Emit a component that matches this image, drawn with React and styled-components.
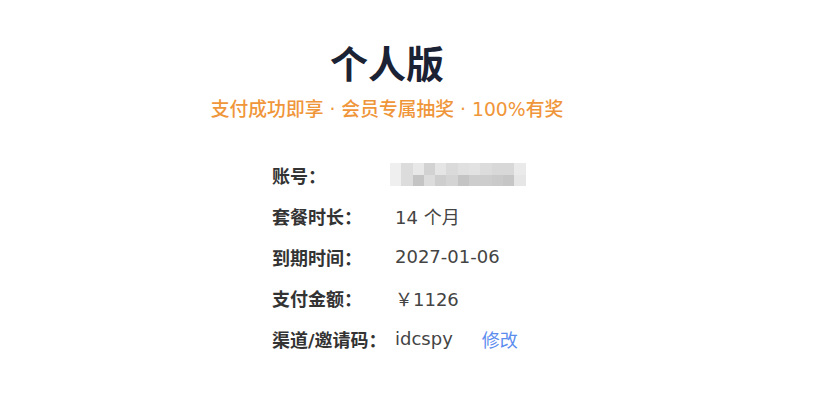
import React from "react";
import styled, { createGlobalStyle } from "styled-components";

const GlobalStyle = createGlobalStyle`
  body {
    margin: 0;
    background: #fff;
    font-family: "DejaVu Sans", "Noto Sans CJK SC", sans-serif;
  }
`;

const Page = styled.div`
  width: 774px;
  padding-top: 42px;
  text-align: center;
`;

const Title = styled.h1`
  margin: 0;
  font-size: 38px;
  line-height: 46px;
  font-weight: 700;
  color: #1a2233;
`;

const Subtitle = styled.p`
  margin: 10px 0 0;
  font-size: 18.8px;
  line-height: 24px;
  font-weight: 500;
  color: #f0963a;
`;

const InfoList = styled.div`
  width: 230px;
  margin: 32px auto 0;
  display: grid;
  grid-template-columns: 123px auto;
  grid-auto-rows: 41px;
  align-items: center;
  text-align: left;
`;

const Label = styled.div`
  font-size: 18px;
  font-weight: 700;
  color: #333;
  white-space: nowrap;
`;

const Value = styled.div`
  font-size: 18px;
  color: #444;
  white-space: nowrap;
  display: flex;
  align-items: center;
`;

const EditLink = styled.a`
  margin-left: 29px;
  color: #5b8def;
  text-decoration: none;
  cursor: pointer;
`;

const Mosaic = styled.div`
  display: grid;
  grid-template-columns: repeat(12, 11.3px);
  grid-template-rows: repeat(2, 11.5px);
  margin-left: -5px;
`;

const Cell = styled.span`
  background: ${(p) => p.$c};
`;

const mosaic = [
  "#efefef", "#dcdcdc", "#e8e8e8", "#d2d2d2", "#e5e5e5", "#dadada",
  "#e0e0e0", "#e2e2e2", "#dcdcdc", "#d8d8d8", "#d8d8d8", "#eaeaea",
  "#efefef", "#dcdcdc", "#c4c4c4", "#dcdcdc", "#cecece", "#d4d4d4",
  "#c4c4c4", "#cdcdcd", "#cdcdcd", "#cacaca", "#c6c6c6", "#e6e6e6",
];

export default function App() {
  return (
    <>
      <GlobalStyle />
      <Page>
        <Title>个人版</Title>
        <Subtitle>支付成功即享 · 会员专属抽奖 · 100%有奖</Subtitle>
        <InfoList>
          <Label>账号：</Label>
          <Value>
            <Mosaic>
              {mosaic.map((c, i) => (
                <Cell key={i} $c={c} />
              ))}
            </Mosaic>
          </Value>
          <Label>套餐时长：</Label>
          <Value>14 个月</Value>
          <Label>到期时间：</Label>
          <Value>2027-01-06</Value>
          <Label>支付金额：</Label>
          <Value>￥1126</Value>
          <Label>渠道/邀请码：</Label>
          <Value>
            idcspy
            <EditLink>修改</EditLink>
          </Value>
        </InfoList>
      </Page>
    </>
  );
}
